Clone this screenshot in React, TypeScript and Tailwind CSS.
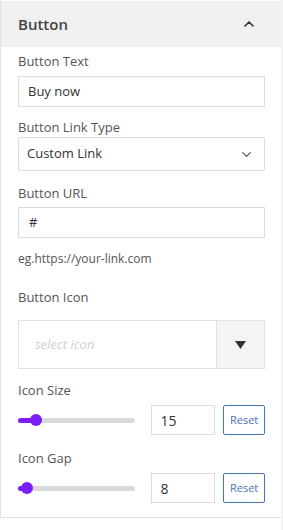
import { ChevronUp, ChevronDown } from 'lucide-react';

function Slider({ pct }: { pct: number }) {
    return (
        <div className="relative h-[12px] w-[118px]">
            <div className="absolute left-0 right-0 top-[4px] h-[5px] rounded-full bg-[#d9d9db]"></div>
            <div className="absolute left-0 top-[4px] h-[5px] rounded-full bg-[#7a1ff5]" style={{ width: `${pct}%` }}></div>
            <div
                className="absolute top-0 h-[12px] w-[12px] -translate-x-1/2 rounded-full bg-[#7a1ff5]"
                style={{ left: `${pct}%` }}
            ></div>
        </div>
    );
}

function RangeRow({ label, value, pct }: { label: string; value: string; pct: number }) {
    return (
        <div className="flex flex-col">
            <label className="text-[13px] leading-[18px] text-[#555]">{label}</label>
            <div className="mt-[6px] flex items-center">
                <Slider pct={pct} />
                <div className="ml-[16px] flex h-[30px] w-[64px] items-center border border-[#dcdcde] px-[8px] text-[14px] text-[#333]">
                    {value}
                </div>
                <button className="ml-[8px] h-[30px] w-[42px] rounded-[2px] border border-[#4a72b5] text-[11px] text-[#4a72b5]">
                    Reset
                </button>
            </div>
        </div>
    );
}

export default function App() {
    return (
        <div className="flex h-[530px] w-[283px] bg-white font-['Open_Sans',sans-serif]">
            <div className="flex h-[518px] w-[281px] flex-col border-l border-b border-[#e2e2e2] pt-[1px]">
                <div className="flex h-[46px] items-center justify-between bg-[#f0f0f0] pl-[17px] pr-[24px]">
                    <span className="text-[15px] font-semibold text-[#444]">Button</span>
                    <ChevronUp size={16} strokeWidth={2.5} className="text-[#333]" />
                </div>
                <div className="flex flex-col pl-[17px] pr-[16px] pt-[5px]">
                    <label className="text-[13px] leading-[18px] text-[#555]">Button Text</label>
                    <div className="mt-[6px] flex h-[31px] items-center border border-[#dcdcde] px-[9px] text-[13px] text-[#333]">
                        Buy now
                    </div>

                    <label className="mt-[11px] text-[13px] leading-[18px] text-[#555]">Button Link Type</label>
                    <div className="mt-[1px] flex h-[34px] items-center justify-between rounded-[2px] border border-[#dcdcde] pl-[8px] pr-[10px] text-[13px] text-[#333]">
                        <span>Custom Link</span>
                        <ChevronDown size={15} strokeWidth={2} className="text-[#555]" />
                    </div>

                    <label className="mt-[13px] text-[13px] leading-[18px] text-[#555]">Button URL</label>
                    <div className="mt-[5px] flex h-[31px] items-center border border-[#dcdcde] px-[10px] text-[13px] text-[#333]">
                        #
                    </div>
                    <p className="mt-[12px] text-[12px] leading-[18px] text-[#555]">eg.https://your-link.com</p>

                    <label className="mt-[20px] text-[13px] leading-[18px] text-[#555]">Button Icon</label>
                    <div className="mt-[14px] flex h-[49px] border border-[#e0e0e0]">
                        <div className="flex flex-1 items-center pl-[16px] text-[13px] italic text-[#d0d0d0]">select icon</div>
                        <div className="flex w-[48px] items-center justify-center border-l border-[#e0e0e0] bg-[#f4f4f4]">
                            <svg width="11" height="8" viewBox="0 0 11 8">
                                <path d="M0 0 H11 L5.5 8 Z" fill="#333" />
                            </svg>
                        </div>
                    </div>

                    <div className="mt-[12px]">
                        <RangeRow label="Icon Size" value="15" pct={15} />
                    </div>
                    <div className="mt-[14px]">
                        <RangeRow label="Icon Gap" value="8" pct={8} />
                    </div>
                </div>
            </div>
            <div className="h-[530px] w-[2px] bg-[#f2f2f2]"></div>
        </div>
    );
}
